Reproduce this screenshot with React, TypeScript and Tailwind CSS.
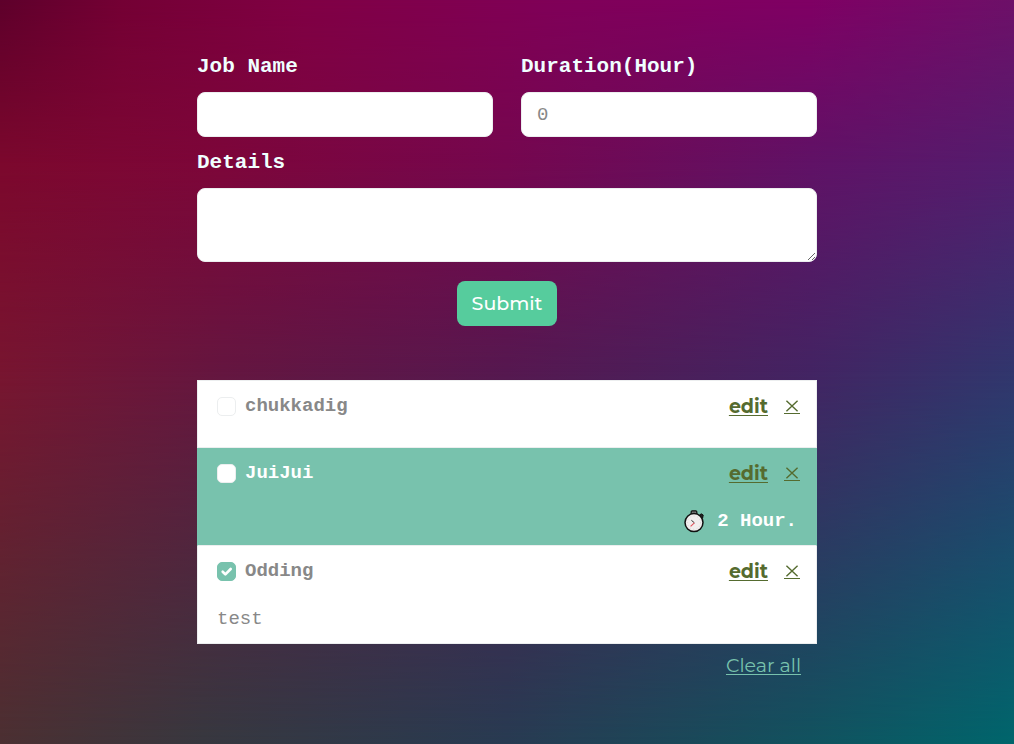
import { useState } from "react";

type Job = {
  id: number;
  name: string;
  hours?: number;
  details?: string;
  done: boolean;
  active: boolean;
};

const initialJobs: Job[] = [
  { id: 1, name: "chukkadig", done: false, active: false },
  { id: 2, name: "JuiJui", hours: 2, done: false, active: true },
  { id: 3, name: "Odding", details: "test", done: true, active: false },
];

const labelClass = "text-[21px] leading-7 font-bold text-[#f0ffff]";
const fieldClass =
  "w-full rounded-lg border border-[#eceeef] bg-white px-[15px] text-[19px] text-[#888] placeholder:text-[#888] outline-none";

function Backdrop() {
  return (
    <div aria-hidden="true" className="absolute inset-0 -z-10">
      <div className="absolute inset-0 bg-[linear-gradient(90deg,#4b3032_0%,#37383f_20%,#283b52_50%,#11535f_80%,#00666c_100%)]" />
      <div className="absolute inset-0 bg-[linear-gradient(90deg,#781530_0%,#651640_22%,#561850_50%,#432463_80%,#31366d_100%)] [mask-image:linear-gradient(180deg,#000_50%,transparent_100%)]" />
      <div className="absolute inset-0 bg-[linear-gradient(90deg,#7c082d_0%,#7d063a_22%,#75074f_50%,#601266_80%,#541d6e_100%)] [mask-image:linear-gradient(180deg,#000_22%,transparent_50%)]" />
      <div className="absolute inset-0 bg-[linear-gradient(90deg,#5e002b_0%,#740034_12%,#800044_30%,#800058_55%,#7f0064_80%,#6d1068_100%)] [mask-image:linear-gradient(180deg,#000_0%,transparent_22%)]" />
    </div>
  );
}

function Cross() {
  return (
    <svg viewBox="0 0 16 14" className="h-[14px] w-4 border-b border-current" aria-hidden="true">
      <path d="M2 0.8 14 12M14 0.8 2 12" fill="none" stroke="currentColor" strokeWidth="1.5" />
    </svg>
  );
}

function Stopwatch() {
  return (
    <svg viewBox="0 0 20 23" className="h-[23px] w-5" aria-hidden="true">
      <path d="M15 5.6 17.2 3.8 19.2 5 18.6 8.2Z" fill="#222" stroke="#111" strokeWidth="1" />
      <rect x="7.2" y="0.8" width="5.6" height="4.5" rx="1" fill="#777" stroke="#111" strokeWidth="1.2" />
      <circle cx="10" cy="12.6" r="9" fill="#f1eeee" stroke="#111" strokeWidth="1.5" />
      <circle cx="10" cy="12.6" r="6.6" fill="none" stroke="#c9c4c4" strokeWidth="0.7" strokeDasharray="0.8 2.6" />
      <path d="M7.4 10.3 10.4 12.8" stroke="#333" strokeWidth="1" />
      <path d="M10.4 12.8 6.6 16.4" stroke="#e0525c" strokeWidth="1.1" />
    </svg>
  );
}

function JobRow({ job, onToggle, onRemove }: { job: Job; onToggle: () => void; onRemove: () => void }) {
  const tone = job.active ? "border-x-[#78c2ad] bg-[#78c2ad] text-white" : "border-x-[#eceeef] bg-white text-[#888]";
  return (
    <li className={`border-x border-b border-b-[#eceeef] px-[19px] pt-[13px] pb-2 ${tone}`}>
      <div className="flex h-6 items-center justify-between">
        <div className="flex items-center gap-[9px]">
          <span className="grid size-[19px] place-items-center">
            <input
              id={`job-${job.id}`}
              type="checkbox"
              checked={job.done}
              onChange={onToggle}
              className="col-start-1 row-start-1 size-[19px] appearance-none rounded-[5px] border border-[#eceeef] bg-white checked:border-[#78c2ad] checked:bg-[#78c2ad]"
            />
            {job.done && (
              <svg viewBox="0 0 20 20" className="pointer-events-none col-start-1 row-start-1 size-[19px]" aria-hidden="true">
                <path d="m6 10.2 2.8 2.8L14.4 7.4" fill="none" stroke="#fff" strokeWidth="2.8" strokeLinecap="round" strokeLinejoin="round" />
              </svg>
            )}
          </span>
          <label htmlFor={`job-${job.id}`} className="text-[19px] leading-6 font-bold">
            {job.name}
          </label>
        </div>
        <div className="-mr-[3px] flex items-center gap-4 pt-0.5 font-['Montserrat',Inter,sans-serif] text-[19px] leading-6 text-[#556b2f]">
          <a href="#edit" className="font-bold underline decoration-1 underline-offset-2">
            edit
          </a>
          <a
            href="#remove"
            aria-label={`Remove ${job.name}`}
            onClick={(e) => {
              e.preventDefault();
              onRemove();
            }}
          >
            <Cross />
          </a>
        </div>
      </div>
      <div className="mt-[21px] text-[19px] leading-[31px]">
        {job.details && <p>{job.details}</p>}
        {job.hours && (
          <p className="flex items-center justify-end gap-[13px] font-bold">
            <Stopwatch />
            {job.hours} Hour.
          </p>
        )}
      </div>
    </li>
  );
}

export default function App() {
  const [jobs, setJobs] = useState(initialJobs);
  const toggle = (id: number) =>
    setJobs((list) => list.map((j) => (j.id === id ? { ...j, done: !j.done } : j)));
  const remove = (id: number) => setJobs((list) => list.filter((j) => j.id !== id));

  return (
    <main className="relative isolate min-h-screen px-4 pt-[53px] pb-14 font-['Liberation_Mono',monospace]">
      <Backdrop />
      <div className="mx-auto max-w-[620px]">
        <form onSubmit={(e) => e.preventDefault()} className="flex flex-col">
          <div className="grid grid-cols-2 gap-7">
            <div className="flex flex-col gap-[11px]">
              <label htmlFor="job-name" className={labelClass}>
                Job Name
              </label>
              <input id="job-name" type="text" className={`h-[45px] ${fieldClass}`} />
            </div>
            <div className="flex flex-col gap-[11px]">
              <label htmlFor="duration" className={labelClass}>
                Duration(Hour)
              </label>
              <input id="duration" type="text" inputMode="numeric" placeholder="0" className={`h-[45px] ${fieldClass}`} />
            </div>
          </div>
          <div className="mt-3 flex flex-col gap-[11px]">
            <label htmlFor="details" className={labelClass}>
              Details
            </label>
            <textarea id="details" rows={2} className={`h-[74px] py-2 ${fieldClass}`} />
          </div>
          <button
            type="submit"
            className="mt-[19px] h-[45px] self-center rounded-lg bg-[#56cc9d] px-[15px] pt-0.5 font-['Montserrat',Inter,sans-serif] text-[19px] font-medium text-white"
          >
            Submit
          </button>
        </form>

        <ul className="mt-[54px] border-t border-[#eceeef]">
          {jobs.map((job) => (
            <JobRow key={job.id} job={job} onToggle={() => toggle(job.id)} onRemove={() => remove(job.id)} />
          ))}
        </ul>
        <div className="mt-[10px] flex justify-end pr-4">
          <a
            href="#clear"
            onClick={(e) => {
              e.preventDefault();
              setJobs([]);
            }}
            className="font-['Montserrat',Inter,sans-serif] text-[19px] leading-6 text-[#78c2ad] underline decoration-1 underline-offset-2"
          >
            Clear all
          </a>
        </div>
      </div>
    </main>
  );
}
